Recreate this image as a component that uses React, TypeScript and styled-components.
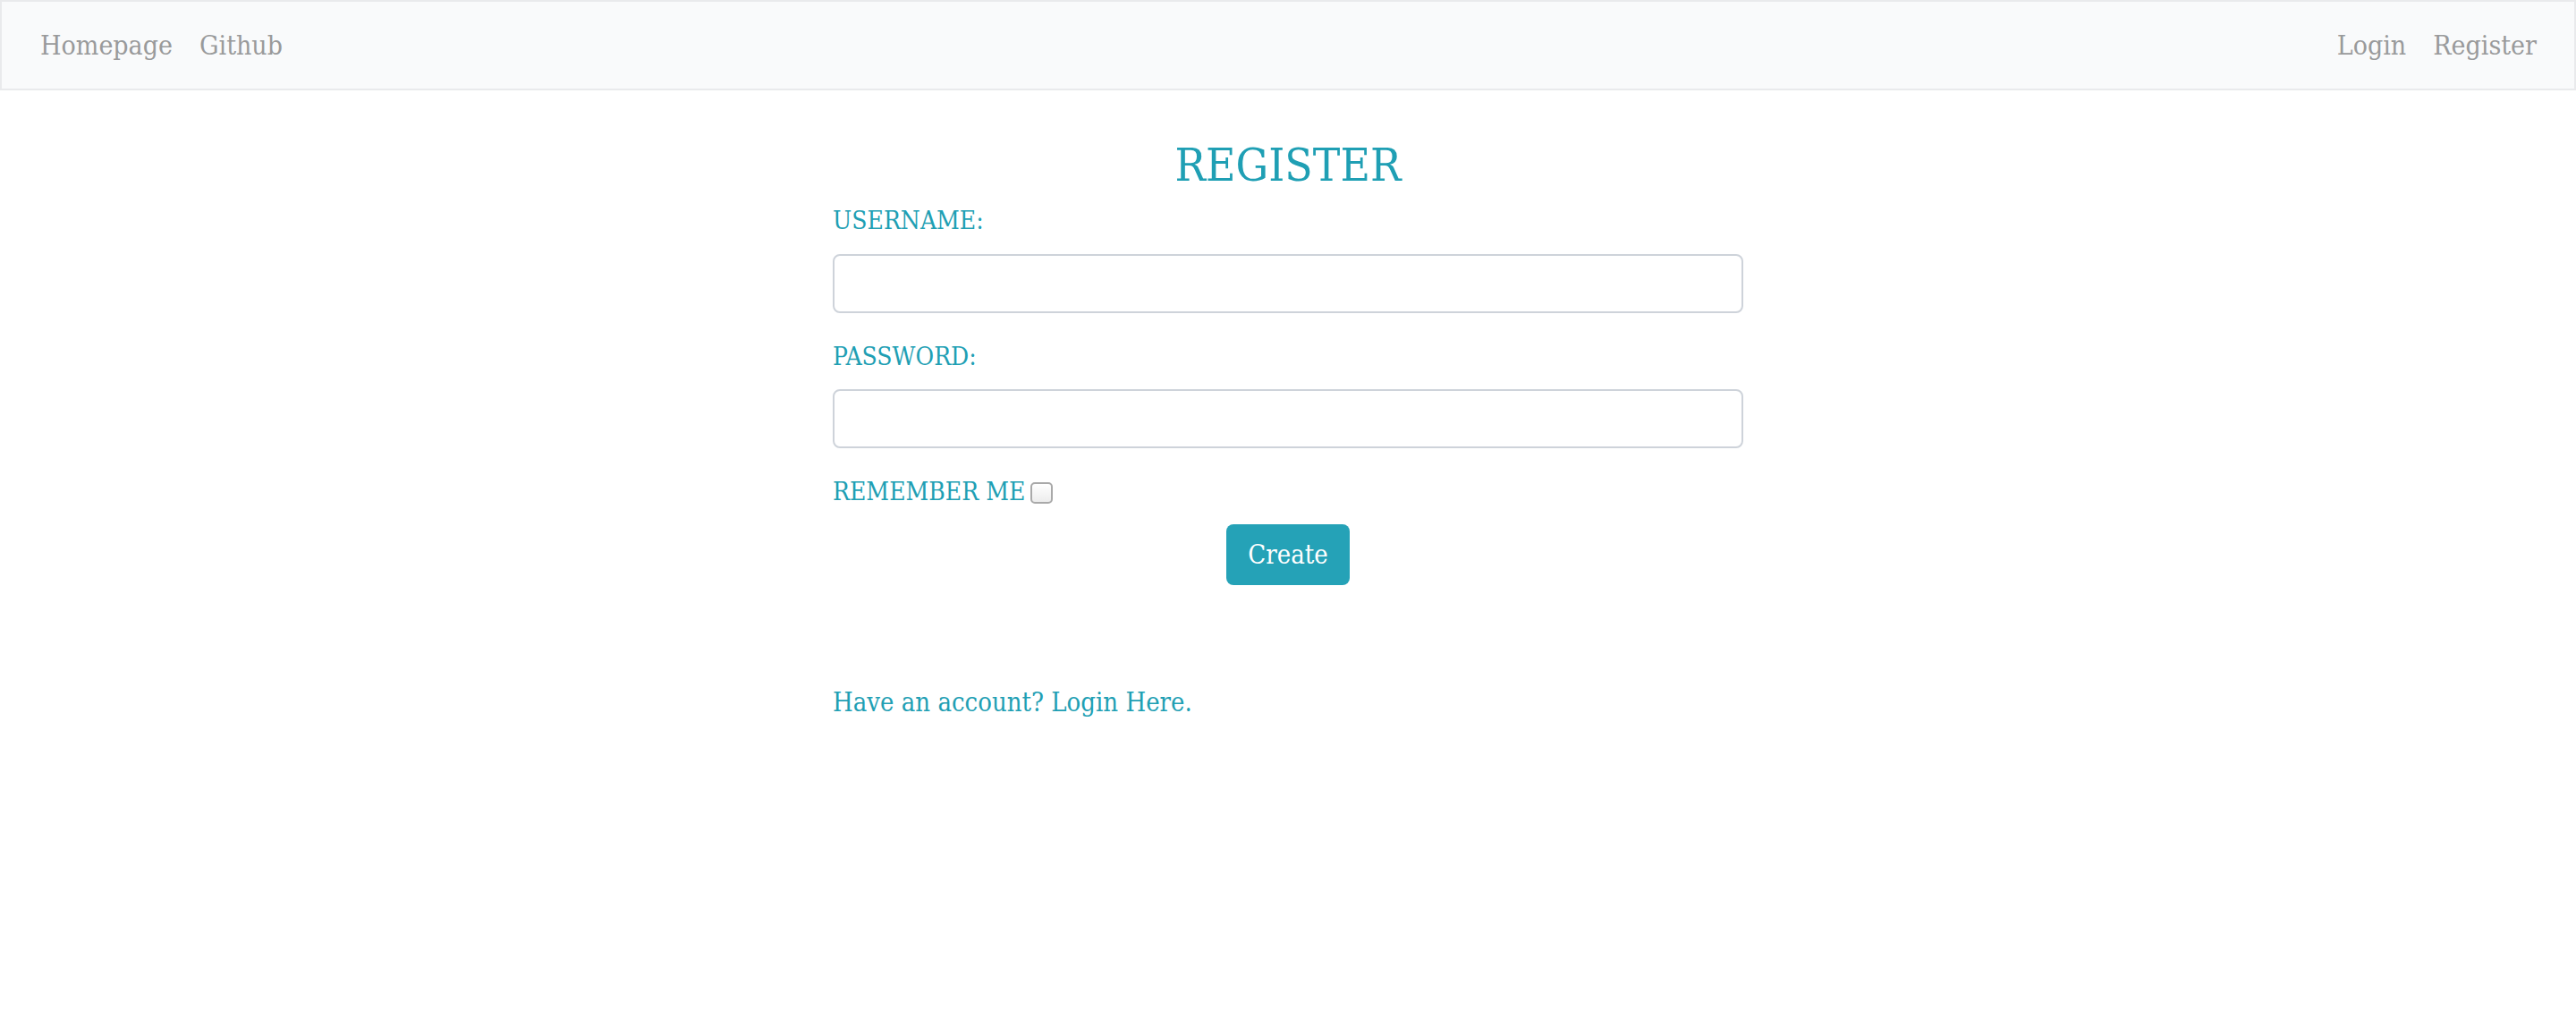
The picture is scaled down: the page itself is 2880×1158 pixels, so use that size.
import React from "react";
import styled, { createGlobalStyle } from "styled-components";

const teal = "#1f9fb4";

const GlobalStyle = createGlobalStyle`
  html, body {
    margin: 0;
    padding: 0;
    background: #fff;
  }
  body {
    font-family: "DejaVu Serif", "Liberation Serif", serif;
    font-stretch: condensed;
    line-height: 1.2;
  }
  * {
    box-sizing: border-box;
  }
`;

const NavBar = styled.nav`
  height: 101px;
  display: flex;
  align-items: center;
  justify-content: space-between;
  padding: 0 42px 0 43px;
  background: #f9fafb;
  border: 2px solid #e9eaec;
`;

const NavGroup = styled.div`
  display: flex;
  align-items: center;
  gap: 30px;
`;

const NavLink = styled.a`
  font-size: 30px;
  color: #999a9b;
  text-decoration: none;
  cursor: pointer;
`;

const Form = styled.form`
  width: 1018px;
  margin: 0 auto;
  padding-top: 53px;
  display: flex;
  flex-direction: column;
`;

const Title = styled.h3`
  margin: 0 0 15px;
  font-size: 51px;
  font-weight: normal;
  text-align: center;
  color: ${teal};
`;

const Label = styled.label<{ gap?: number }>`
  display: block;
  font-size: 28px;
  color: ${teal};
  margin-bottom: ${(p) => p.gap ?? 20}px;
`;

const Input = styled.input`
  display: block;
  width: 100%;
  height: 66px;
  margin-bottom: 32px;
  border: 2px solid #ced3da;
  border-radius: 8px;
  background: #fff;
  outline: none;
`;

const CheckRow = styled.div`
  display: flex;
  align-items: center;
  margin-bottom: 19px;
`;

const CheckBox = styled.input`
  appearance: none;
  width: 25px;
  height: 24px;
  margin: 2px 0 0 6px;
  border: 2px solid #a9a9a9;
  border-radius: 5px;
  background: linear-gradient(#fff, #ececec);
`;

const ButtonRow = styled.div`
  display: flex;
  justify-content: center;
  margin-bottom: 114px;
`;

const Button = styled.button`
  height: 68px;
  padding: 0 24px;
  border: none;
  border-radius: 8px;
  background: #25a2b7;
  color: #fff;
  font-family: inherit;
  font-stretch: condensed;
  font-size: 29px;
  cursor: pointer;
`;

const FooterLink = styled.a`
  font-size: 29px;
  color: ${teal};
  text-decoration: none;
  cursor: pointer;
`;

const App: React.FC = () => {
  return (
    <>
      <GlobalStyle />
      <NavBar>
        <NavGroup>
          <NavLink>Homepage</NavLink>
          <NavLink>Github</NavLink>
        </NavGroup>
        <NavGroup>
          <NavLink>Login</NavLink>
          <NavLink>Register</NavLink>
        </NavGroup>
      </NavBar>
      <Form onSubmit={(e) => e.preventDefault()}>
        <Title>REGISTER</Title>
        <Label htmlFor="username">USERNAME:</Label>
        <Input id="username" type="text" />
        <Label htmlFor="password">PASSWORD:</Label>
        <Input id="password" type="password" />
        <CheckRow>
          <Label htmlFor="remember" gap={0}>
            REMEMBER ME
          </Label>
          <CheckBox id="remember" type="checkbox" />
        </CheckRow>
        <ButtonRow>
          <Button type="submit">Create</Button>
        </ButtonRow>
        <div>
          <FooterLink>Have an account? Login Here.</FooterLink>
        </div>
      </Form>
    </>
  );
};

export default App;
